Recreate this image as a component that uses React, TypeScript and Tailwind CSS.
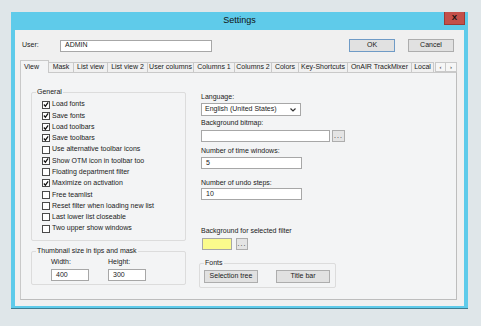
import React from "react";

const FONT = { fontFamily: '"Liberation Sans", Arial, sans-serif' };

const CHECKS: { label: string; checked: boolean }[] = [
  { label: "Load fonts", checked: true },
  { label: "Save fonts", checked: true },
  { label: "Load toolbars", checked: true },
  { label: "Save toolbars", checked: true },
  { label: "Use alternative toolbar icons", checked: false },
  { label: "Show OTM icon in toolbar too", checked: true },
  { label: "Floating department filter", checked: false },
  { label: "Maximize on activation", checked: true },
  { label: "Free teamlist", checked: false },
  { label: "Reset filter when loading new list", checked: false },
  { label: "Last lower list closeable", checked: false },
  { label: "Two upper show windows", checked: false },
];

const TABS: { label: string; w: string }[] = [
  { label: "Mask", w: "w-[25px]" },
  { label: "List view", w: "w-[34px]" },
  { label: "List view 2", w: "w-[40px]" },
  { label: "User columns", w: "w-[46px]" },
  { label: "Columns 1", w: "w-[41px]" },
  { label: "Columns 2", w: "w-[37px]" },
  { label: "Colors", w: "w-[27px]" },
  { label: "Key-Shortcuts", w: "w-[49px]" },
  { label: "OnAIR TrackMixer", w: "w-[64px]" },
  { label: "Local", w: "w-[22px]" },
];

const CheckBox = ({ checked }: { checked: boolean }) => (
  <div className="w-[8px] h-[8px] border border-[#4a4a4a] bg-white flex items-center justify-center shrink-0">
    {checked && (
      <svg width="7" height="7" viewBox="0 0 7 7">
        <polyline points="1,3.5 2.8,5.5 6,1" fill="none" stroke="#111" strokeWidth="1.4" />
      </svg>
    )}
  </div>
);

const Field = ({ value, className }: { value?: string; className: string }) => (
  <div className={`h-[12px] bg-white border border-[#a7a7a7] pl-[4px] flex items-center text-[7px] ${className}`}>
    {value}
  </div>
);

const DotsButton = ({ className }: { className: string }) => (
  <div className={`h-[12px] bg-[#e4e4e4] border border-[#adadad] flex items-center justify-center text-[7px] tracking-[1px] ${className}`}>
    ...
  </div>
);

const Button = ({ label, className }: { label: string; className: string }) => (
  <div className={`h-[13px] bg-[#e1e1e1] border flex items-center justify-center text-[7px] ${className}`}>
    {label}
  </div>
);

export default function App() {
  return (
    <div className="w-[481px] h-[326px] bg-[#dfe6e9] pt-[12px] pl-[11px] text-[#1a1a1a]" style={FONT}>
      <div className="w-[457px] h-[297px] bg-[#5fcbea] flex flex-col border-b border-[#3d7d91]">
        {/* Title bar */}
        <div className="relative h-[18px] flex items-center justify-center text-[9px] text-[#111]">
          Settings
          <div className="absolute right-[3px] top-0 w-[21px] h-[13px] bg-[#c4504a] border border-[#9c3a35] border-t-0 flex items-center justify-center text-[8px] font-bold text-[#111]">
            X
          </div>
        </div>

        {/* Client */}
        <div className="mx-[4px] mb-[2px] flex-1 bg-[#f0f0f0] flex flex-col">
          <div className="mt-[9px] h-[13px] flex items-center pr-[10px]">
            <div className="pl-[7px] w-[45px] text-[7px]">User:</div>
            <Field value="ADMIN" className="w-[152px]" />
            <Button label="OK" className="ml-auto w-[46px] border-[#6f9bc6]" />
            <Button label="Cancel" className="ml-[13px] w-[46px] border-[#adadad]" />
          </div>

          {/* Tabs */}
          <div className="mt-[8px] h-[12px] pl-[5px] flex items-end text-[7px]">
            <div className="relative z-10 w-[29px] h-[13px] -mb-[1px] bg-[#f3f4f5] border border-b-0 border-[#c9c9c9] pl-[3px] pt-[1px]">
              View
            </div>
            {TABS.map((t) => (
              <div
                key={t.label}
                className={`${t.w} h-[10px] bg-[#f0f0f0] border border-l-0 border-b-0 border-[#c9c9c9] flex items-center justify-center whitespace-nowrap`}
              >
                {t.label}
              </div>
            ))}
            <div className="ml-[1px] w-[11px] h-[10px] bg-[#f6f6f6] border border-[#c9c9c9] flex items-center justify-center text-[6px]">
              ‹
            </div>
            <div className="w-[11px] h-[10px] bg-[#f6f6f6] border border-l-0 border-[#c9c9c9] flex items-center justify-center text-[6px]">
              ›
            </div>
          </div>

          {/* Panel */}
          <div className="w-[437px] h-[228px] ml-[5px] bg-[#f3f4f5] border border-[#c9c9c9] border-r-[#bdbdbd] border-b-[#bdbdbd] flex text-[7px]">
            {/* Left column */}
            <div className="ml-[10px] w-[155px] flex flex-col">
              <fieldset className="mt-[14px] border border-[#dcdcdc] rounded-[2px]">
                <legend className="ml-[4px] px-[1px] leading-[10px]">General</legend>
                <div className="pl-[10px] pt-[2px] pb-[6px]">
                  {CHECKS.map((c) => (
                    <div key={c.label} className="h-[11.27px] flex items-center gap-[2px] whitespace-nowrap">
                      <CheckBox checked={c.checked} />
                      <span>{c.label}</span>
                    </div>
                  ))}
                </div>
              </fieldset>

              <fieldset className="mt-[5px] border border-[#dcdcdc] rounded-[2px]">
                <legend className="ml-[4px] px-[1px] leading-[10px]">Thumbnail size in tips and mask</legend>
                <div className="pl-[19px] pt-[1px] pb-[3px] flex gap-[19px]">
                  <div className="flex flex-col">
                    <div className="leading-[10px]">Width:</div>
                    <Field value="400" className="mt-[2px] w-[38px]" />
                  </div>
                  <div className="flex flex-col">
                    <div className="leading-[10px]">Height:</div>
                    <Field value="300" className="mt-[2px] w-[38px]" />
                  </div>
                </div>
              </fieldset>
            </div>

            {/* Right column */}
            <div className="ml-[15px] flex flex-col">
              <div className="mt-[19px] leading-[10px]">Language:</div>
              <div className="mt-[1px] w-[100px] h-[13px] bg-white border border-[#a7a7a7] pl-[3px] pr-[4px] flex items-center justify-between">
                <span>English (United States)</span>
                <svg width="6" height="4" viewBox="0 0 6 4">
                  <polyline points="0.5,0.5 3,3 5.5,0.5" fill="none" stroke="#333" strokeWidth="1.2" />
                </svg>
              </div>

              <div className="mt-[2px] leading-[10px]">Background bitmap:</div>
              <div className="mt-[2px] flex gap-[2px]">
                <Field className="w-[129px]" />
                <DotsButton className="w-[13px]" />
              </div>

              <div className="mt-[4px] leading-[10px]">Number of time windows:</div>
              <Field value="5" className="mt-[1px] w-[101px]" />

              <div className="mt-[9px] leading-[10px]">Number of undo steps:</div>
              <Field value="10" className="w-[101px]" />

              <div className="mt-[26px] leading-[10px]">Background for selected filter</div>
              <div className="mt-[2px] flex gap-[4px] pl-[1px]">
                <div className="w-[30px] h-[12px] bg-[#fbfb8c] border border-[#a7a7a7]" />
                <DotsButton className="w-[12px]" />
              </div>

              <fieldset className="-ml-[2px] mt-[8px] w-[137px] border border-[#dcdcdc] rounded-[2px]">
                <legend className="ml-[4px] px-[1px] leading-[10px]">Fonts</legend>
                <div className="pl-[4px] pt-[2px] pb-[4px] flex gap-[18px]">
                  <Button label="Selection tree" className="w-[54px] h-[12px] border-[#adadad]" />
                  <Button label="Title bar" className="w-[54px] h-[12px] border-[#adadad]" />
                </div>
              </fieldset>
            </div>
          </div>
        </div>
      </div>
    </div>
  );
}
